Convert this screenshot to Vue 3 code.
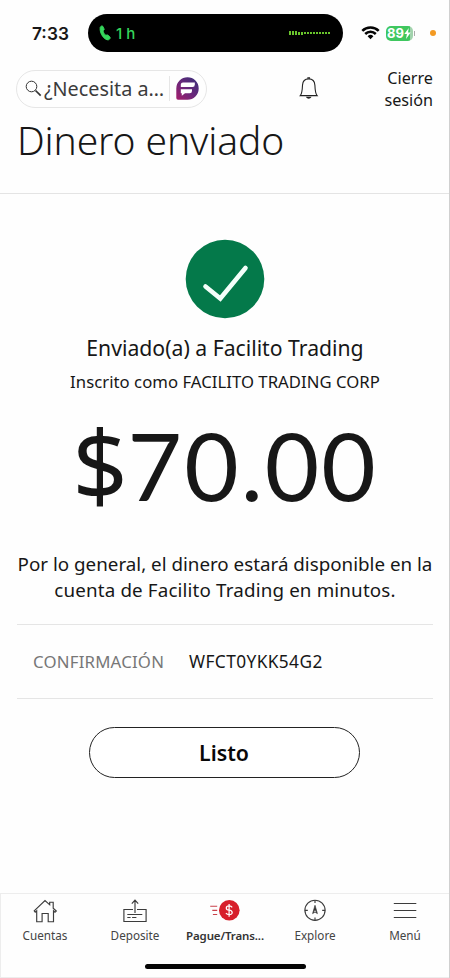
<script setup>
const bars = [4, 4, 4, 3, 3, 2, 2, 2, 2, 2, 2, 2, 2, 2]
const tabs = [
  { id: 'home', label: 'Cuentas' },
  { id: 'deposit', label: 'Deposite' },
  { id: 'pay', label: 'Pague/Trans...', active: true },
  { id: 'explore', label: 'Explore' },
  { id: 'menu', label: 'Menú' },
]
</script>

<template>
  <div class="screen">
    <div class="status">
      <span class="time">7:33</span>
      <div class="island">
        <svg class="phone" width="12" height="16" viewBox="0 0 12 16">
          <path d="M1.200 2.200C2 .9 3.200.5 3.800 1.300l1.300 2.600c.3.7-.1 1.200-.9 1.800-.3 1.200 1.300 3.900 2.700 4.600.9-.4 1.500-.6 2.100-.1l2 1.900c.7.9-.2 2.200-1.500 2.700C6 15.700.1 8.700 1.200 2.200Z" fill="#35d65b" stroke="#35d65b" stroke-width=".9" />
        </svg>
        <span class="duration">1 h</span>
        <div class="wave">
          <i v-for="(h, n) in bars" :key="n" :style="{ height: h + 'px' }"></i>
        </div>
      </div>
      <svg class="wifi" width="19" height="14" viewBox="0 0 19 14" fill="none" stroke="#050505" stroke-width="2.500">
        <path d="M1.300 4.800a11.600 11.600 0 0 1 16.400 0M4.200 8a7.500 7.500 0 0 1 10.600 0" />
        <path d="M6.600 10.300a4.100 4.100 0 0 1 5.800 0L9.500 13.200Z" fill="#050505" stroke="none" />
      </svg>
      <div class="battery">
        <span>89</span>
        <svg width="7" height="11" viewBox="0 0 7 11"><path d="M4.800 0 .3 6h2.600L2 11l4.700-6.400H4Z" fill="#fff" /></svg>
      </div>
      <i class="cap"></i>
      <i class="dot"></i>
    </div>

    <header class="header">
      <div class="toolbar">
        <div class="search">
          <svg class="glass" width="17" height="18" viewBox="0 0 17 18" fill="none" stroke="#333">
            <circle cx="6.500" cy="6.500" r="5.300" stroke-width="1" />
            <path d="m10.500 10.500 5.200 5.200" stroke-width="1.700" />
          </svg>
          <span class="placeholder">¿Necesita a…</span>
          <svg class="fargo" width="23" height="23" viewBox="0 0 23 23">
            <defs>
              <linearGradient id="fargo-fill" x1="0" y1="1" x2="1" y2="0">
                <stop offset="0" stop-color="#a51d6b" />
                <stop offset=".45" stop-color="#6c277a" />
                <stop offset="1" stop-color="#353078" />
              </linearGradient>
            </defs>
            <path d="M11.500.3a11.200 11.200 0 0 1 0 22.400H2Q.3 22.700.3 21V11.500A11.200 11.200 0 0 1 11.500.3Z" fill="url(#fargo-fill)" />
            <path d="M7 5.500h11.800v2.300q0 2.200-2.200 2.200H4.800V7.700Q4.800 5.500 7 5.500Z" fill="#fff" />
            <path d="M4.800 12.300h11.200v1.700q0 2.300-2.300 2.300H9l-3.200 2.500v-2.500h-1Z" fill="#fff" />
          </svg>
        </div>
        <svg class="bell" width="20" height="23" viewBox="0 0 20 23" fill="none" stroke="#222" stroke-width="1.100">
          <path d="M9.700 1.900c-3.800 0-6 2.700-6.200 6.300-.2 5.200-.5 8.500-2.200 10.400h16.800c-1.700-1.900-2-5.200-2.200-10.400-.2-3.600-2.400-6.300-6.200-6.300Z" />
          <path d="M8.900 1.700V.7h1.600v1M7.800 20.300c.6 1.100 3.200 1.100 3.800 0Z" />
        </svg>
        <div class="signoff">Cierre<br />sesión</div>
      </div>
      <h1>Dinero enviado</h1>
    </header>

    <main class="content">
      <svg class="check" width="80" height="80" viewBox="0 0 80 80">
        <circle cx="40" cy="40" r="39.300" fill="#04794a" />
        <path d="m20.500 47.500 14.800 12L60.500 29" fill="none" stroke="#f4fffa" stroke-width="4.600" stroke-linecap="round" stroke-linejoin="miter" />
      </svg>
      <h2>Enviado(a) a Facilito Trading</h2>
      <p class="registered">Inscrito como FACILITO TRADING CORP</p>
      <div class="amount"><span class="currency">$</span>70.00</div>
      <p class="note">Por lo general, el dinero estará disponible en la<br /><span class="line2">cuenta de Facilito Trading en minutos.</span></p>
      <div class="confirmation">
        <span class="key">CONFIRMACIÓN</span>
        <span class="value">WFCT0YKK54G2</span>
      </div>
      <button class="done">Listo</button>
    </main>

    <nav class="tabs">
      <div class="tab-row">
        <div v-for="t in tabs" :key="t.id" class="tab" :class="{ active: t.active }">
          <svg width="32" height="26" viewBox="0 0 32 26" fill="none" stroke="#3c3c3c" stroke-width="1.150">
            <g v-if="t.id === 'home'">
              <path d="M5.200 12.800 16 2.500l4.700 4.300V4.200h3.500v6l3.100 2.800-1.300 1.200-1.500-1.400v10.900h-5.300v-8.200h-6.100v8.200H7.700V12.800l-1.500 1.300Z" />
            </g>
            <g v-else-if="t.id === 'deposit'">
              <path d="M14 11.500H4.900v12h22.200v-12H18M16 15V2.400M12.800 5.600 16 2.200l3.200 3.400M8.300 16.500h15M8.300 19.500h3.300m1.500 0h4.300" />
            </g>
            <g v-else-if="t.id === 'pay'">
              <circle cx="20.300" cy="12.300" r="10.300" fill="#d71f2b" stroke="none" />
              <path d="M1.200 8.200h7M3.300 12.300h4.900M3.900 16.500h4.300" stroke="#c9424b" />
              <path d="M23.200 9.300c-.7-1-1.700-1.400-3-1.400-3.900 0-3.800 3.900-.1 4.300 4.100.5 4.200 4.500.1 4.500-1.400 0-2.500-.5-3.300-1.500M20.100 5.900v12.800" stroke="#fff" stroke-width="1.250" />
            </g>
            <g v-else-if="t.id === 'explore'">
              <circle cx="16" cy="12.300" r="10.100" />
              <path d="M16 2v3M16 19.600v3M5.800 12.300h3M23.200 12.300h3" />
              <path d="m16 7.300-2.400 8.300 2.400-1.500 2.400 1.500Z" fill="#333" stroke-width=".7" />
              <path d="m16 12-1 2.200 1-.5 1 .5Z" fill="#fff" stroke="none" />
            </g>
            <path v-else d="M4.800 5.500h22.500M4.800 12.500h22.500M4.800 19.500h22.500" />
          </svg>
          <span>{{ t.label }}</span>
        </div>
      </div>
      <div class="home-indicator"></div>
    </nav>
  </div>
</template>

<style>
body {
  background: #fff;
}
</style>

<style scoped>
* {
  box-sizing: border-box;
}
.screen {
  width: 450px;
  height: 978px;
  display: flex;
  flex-direction: column;
  overflow: hidden;
  background: #fefefe;
  border-right: 1px solid #d0d0d0;
  color: #171717;
  font-family: "Noto Sans", "Open Sans", sans-serif;
}
h1, h2, p {
  margin: 0;
  font-weight: 400;
}
svg {
  display: block;
  flex: none;
}
.status {
  height: 66px;
  display: flex;
  align-items: center;
  font-family: Inter, sans-serif;
}
.time {
  width: 56px;
  margin-left: 32px;
  font-size: 17.300px;
  font-weight: 600;
}
.island {
  width: 255px;
  height: 38px;
  padding: 0 13px 0 11px;
  display: flex;
  align-items: center;
  border-radius: 19px;
  background: #000;
}
.duration {
  margin-left: 5px;
  color: #35d65b;
  font-size: 15px;
  font-weight: 500;
}
.wave {
  display: flex;
  align-items: center;
  gap: 1px;
  margin-left: auto;
}
.wave i {
  width: 2px;
  background: #69c52c;
}
.wifi {
  margin-left: 18px;
}
.battery {
  width: 27px;
  height: 15px;
  margin-left: 6px;
  padding-left: 1px;
  display: flex;
  align-items: center;
  border-radius: 5px;
  background: linear-gradient(90deg, #3fc75f 88%, #a2d3ad 88%);
  color: #fff;
  font-size: 13px;
  font-weight: 700;
}
.cap {
  width: 1px;
  height: 5px;
  margin-left: 1px;
  background: #aaa;
}
.dot {
  width: 6px;
  height: 6px;
  margin-left: 15px;
  border-radius: 50%;
  background: #f39a23;
}
.header {
  height: 128px;
  border-bottom: 1px solid #e4e4e4;
}
.toolbar {
  height: 45px;
  padding: 0 16px 0 16px;
  display: flex;
  align-items: center;
}
.search {
  width: 191px;
  height: 38px;
  padding: 0 7px 0 8px;
  display: flex;
  align-items: center;
  border: 1px solid #e6e6e6;
  border-radius: 19px;
  color: #3b3b3b;
}
.placeholder {
  width: 126px;
  height: 25px;
  margin-left: 2px;
  border-right: 1px solid #e6e6e6;
  font-size: 19.800px;
  line-height: 26px;
  white-space: nowrap;
}
.fargo {
  margin-left: 6px;
}
.bell {
  margin-left: 92px;
}
.signoff {
  margin-left: auto;
  padding-top: 1px;
  font-size: 16.200px;
  line-height: 22.500px;
  text-align: right;
}
h1 {
  padding-left: 17px;
  font-size: 39px;
  font-weight: 300;
  line-height: 57px;
  letter-spacing: -.12px;
  white-space: nowrap;
}
.content {
  height: 699px;
  padding: 45px 16px 0 17px;
  display: flex;
  flex-direction: column;
  align-items: center;
}
h2 {
  margin-top: 13px;
  font-size: 21.200px;
  line-height: 32px;
  white-space: nowrap;
}
.registered {
  margin-top: 7px;
  font-size: 16.700px;
  line-height: 22px;
  letter-spacing: .04px;
  white-space: nowrap;
}
.amount {
  margin-top: 17px;
  height: 110px;
  font-family: Lato, sans-serif;
  font-size: 94px;
  line-height: 110px;
  letter-spacing: 2px;
  white-space: nowrap;
}
.currency {
  font-family: "Noto Sans", sans-serif;
  font-size: 97px;
  line-height: 0;
  letter-spacing: 0;
}
.note {
  margin-top: 31px;
  font-size: 18.800px;
  line-height: 26px;
  text-align: center;
  white-space: nowrap;
}
.line2 {
  letter-spacing: .15px;
}
.confirmation {
  width: 100%;
  height: 75px;
  margin-top: 21px;
  padding-left: 16px;
  display: flex;
  align-items: center;
  border: solid #e5e5e5;
  border-width: 1px 0;
  font-size: 16.800px;
}
.key {
  width: 156px;
  color: #777;
  letter-spacing: .2px;
}
.value {
  font-size: 17.300px;
  letter-spacing: .4px;
}
.done {
  width: 271px;
  height: 51px;
  margin: 28px 2px 0 0;
  padding: 0;
  border: 1px solid #222;
  border-radius: 26px;
  background: #fff;
  color: #080808;
  font: 600 21.300px "Noto Sans", sans-serif;
}
.tabs {
  height: 85px;
  border: 1px solid #ededed;
  border-right: 0;
  display: flex;
  flex-direction: column;
  align-items: center;
}
.tab-row {
  flex: none;
  width: 450px;
  height: 70px;
  padding-top: 4px;
  display: grid;
  grid-template-columns: repeat(5, minmax(0, 1fr));
}
.tab {
  display: flex;
  flex-direction: column;
  align-items: center;
  gap: 3px;
  color: #444;
  font-size: 11.700px;
  line-height: 17px;
  white-space: nowrap;
}
.active {
  color: #333;
  font-size: 11.500px;
  font-weight: 600;
  letter-spacing: -.12px;
}
.home-indicator {
  width: 161px;
  height: 5px;
  border-radius: 3px;
  background: #050505;
}
</style>
